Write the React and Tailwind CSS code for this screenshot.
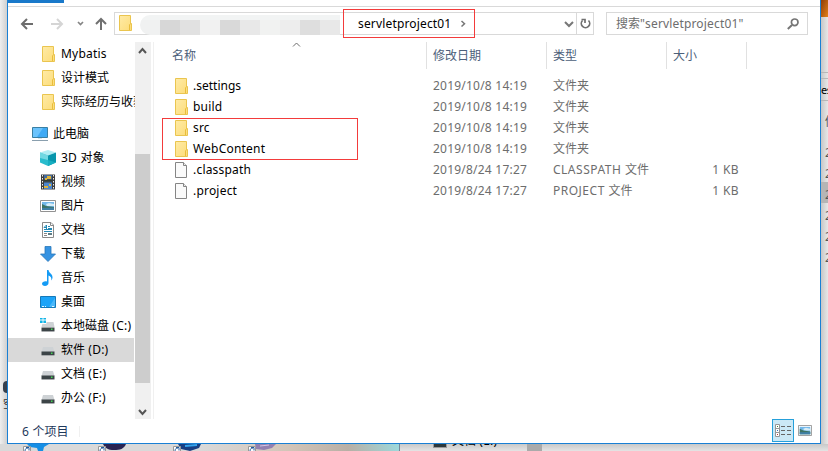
import React from 'react';

// Latin runs are set a little wider than the CJK runs beside them.
function T({ children, className = '', latin = 'tracking-[0.22px]' }) {
  return (
    <span className={`whitespace-pre ${className}`}>
      {children.split(/([\x20-\x7e]+)/).filter(Boolean).map((part, i) => (
        <span key={i} className={/^[\x20-\x7e]/.test(part) ? latin : ''}>{part}</span>
      ))}
    </span>
  );
}

const Folder = () => (
  <svg className="block h-4 w-[13px]" viewBox="0 0 13 16">
    <defs>
      <linearGradient id="fold" x2="1" y2="1"><stop stopColor="#ffeba6" /><stop offset="1" stopColor="#fcdc79" /></linearGradient>
    </defs>
    <path d="M.5.5h11v8h1v7H.5z" fill="url(#fold)" stroke="#eac54f" />
    <path d="M10.5 15V10l1-1.5" fill="none" stroke="#e9bd3b" />
  </svg>
);

const Doc = () => (
  <svg className="block h-4 w-[13px]" viewBox="0 0 13 16">
    <path d="M.5.5h8l3 3v12H.5z" fill="#fafafa" stroke="#858585" />
    <path d="M8.5.5v3h3" fill="#eee" stroke="#858585" />
  </svg>
);

const Drive = ({ system }) => (
  <svg className="block size-4" viewBox="0 0 16 16">
    {system && <path d="M0 0h2.6v2.6H0zM3.4 0H6v2.6H3.4zM0 3.4h2.6V6H0zM3.4 3.4H6V6H3.4z" fill="#12b4e6" transform="translate(0 -1)" />}
    <path d={system ? 'M6.5 4h7l1 5H1.500l.8-3h4z' : 'M3 5h10l1.500 5h-13z'} fill="#ced2d5" />
    <path d="M1.500 9.500h13V13h-13z" fill="#3c4447" />
    <path d="M1.500 13h13v1h-13z" fill="#a7aaac" />
    <path d="M11 10.500h1.500V12H11z" fill="#43d854" />
  </svg>
);

const Monitor = () => (
  <svg className="block size-4" viewBox="0 0 16 16">
    <path d="M.5 1.5h15v10H.5z" fill="#3faaf5" stroke="#397fa3" />
    <path d="M1 2h10L5 11H1z" fill="#6bc3fc" />
    <path d="M6 12h4v1H6z" fill="#d6e4ec" />
    <path d="M0 14.5h16" stroke="#8a9fae" />
  </svg>
);

const Cube = () => (
  <svg className="block size-4" viewBox="0 0 16 16">
    <path d="M8 0l8 2.5-8 3-8-3z" fill="#b0edf3" />
    <path d="M0 2.5l8 3V16l-8-3.5z" fill="#29bccd" />
    <path d="M16 2.5l-8 3V16l8-3.5z" fill="#0796ac" />
    <path d="M0 2.5l8 3V10L0 8z" fill="#70d8e2" />
    <path d="M8 10l8 2.5L8 16z" fill="#17afc1" />
  </svg>
);

const Film = () => (
  <svg className="block size-4" viewBox="0 0 16 16">
    <path d="M1 .5h14v15H1z" fill="#3d3d3d" />
    <path d="M4 1h8v6.5H4z" fill="#426b9f" />
    <path d="M4 8.5h8V15H4z" fill="#4c87cf" />
    <path d="M4 5.5h8v2H4z" fill="#323b30" />
    <path d="M7 2h4v3H7zM5 4h2v2H5zM9 10h2v2H9zM4 12h4v2H4z" fill="#dfb33b" />
    <path d="M2.5 1v14M13.5 1v14" stroke="#eee" strokeDasharray="1.5 1.5" />
  </svg>
);

const Picture = ({ className = 'h-[12px] w-4' }) => (
  <svg className={`block ${className}`} viewBox="0 0 16 12" preserveAspectRatio="none">
    <path d="M.5.5h15v11H.5z" fill="#fff" stroke="#929292" />
    <path d="M2 2h12v8H2z" fill="#73b8ea" />
    <path d="M6 4l3-1 5 1v2H7z" fill="#d7edf8" />
    <path d="M2 4l4 2 8 1v3H2z" fill="#3d7363" />
    <path d="M2 8l12-.5V10H2z" fill="#3f7fa5" />
  </svg>
);

const Document = () => (
  <svg className="block size-4" viewBox="0 0 16 16">
    <path d="M2.5.5H11L13.5 3v12.5h-11z" fill="#fff" stroke="#898989" />
    <path d="M10.5.5v3h3" fill="none" stroke="#898989" />
    <path d="M4 5.5h2M8 4.5h2M4 7.5h8M8 6.5h4M4 9.5h8" stroke="#2489b5" />
    <path d="M4 5.5L6.5 3v4" stroke="#2489b5" fill="none" />
    <path d="M4 11.5h3M4 13.5h3" stroke="#888" />
    <path d="M8 11h4v2H8z" fill="#5f7c84" />
  </svg>
);

const Download = () => (
  <svg className="block size-4" viewBox="0 0 16 16">
    <path d="M5 .5h6V8h4.5L8 15.5.5 8H5z" fill="#3693e2" stroke="#2877b9" strokeWidth=".8" />
  </svg>
);

const Music = () => (
  <svg className="block size-4" viewBox="0 0 16 16">
    <path d="M7 0h1.5c.4 3.2 4 3.8 4 7.2 0 1.3-.5 2.3-1.3 3.3.6-3-.6-4.2-2.7-5V13c0 1.6-1.5 3-3.5 3C3 16 2 15 2 13.8c0-1.8 2.5-3 5-2.3z" fill="#149bf5" />
  </svg>
);

const Desktop = () => (
  <svg className="block size-4" viewBox="0 0 16 16">
    <path d="M.5 2.5h15v11H.5z" fill="#1ca4f8" stroke="#1679b8" />
    <path d="M9 13l6-9v9z" fill="#49b8fb" />
    <path d="M2 12.5h2M5 12.5h1M12 12.5h2" stroke="#e2f6ff" />
  </svg>
);

const quick = ['Mybatis', '设计模式', '实际经历与收获'];
const places = [
  ['3D 对象', <Cube />], ['视频', <Film />], ['图片', <Picture />], ['文档', <Document />],
  ['下载', <Download />], ['音乐', <Music />], ['桌面', <Desktop />], ['本地磁盘 (C:)', <Drive system />],
  ['软件 (D:)', <Drive />], ['文档 (E:)', <Drive />], ['办公 (F:)', <Drive />],
];
const files = [
  ['.settings', '2019/10/8 14:19', '文件夹', ''],
  ['build', '2019/10/8 14:19', '文件夹', ''],
  ['src', '2019/10/8 14:19', '文件夹', ''],
  ['WebContent', '2019/10/8 14:19', '文件夹', ''],
  ['.classpath', '2019/8/24 17:27', 'CLASSPATH 文件', '1 KB'],
  ['.project', '2019/8/24 17:27', 'PROJECT 文件', '1 KB'],
];
const mosaic = ['bg-[#f0f1f1]', 'bg-[#d7d7d7]', 'bg-[#e1e1e1]', 'bg-[#f1f1f1]', 'bg-[#d9d9d9]', 'bg-[#e8e8e8]', 'bg-[#f1f2f1]', 'bg-[#ededed]', 'bg-[#dedede]', 'bg-[#e8e8e8]'];

function AddressBar() {
  return (
    <div className="flex h-[35px] shrink-0 items-start pt-[5px]">
      <svg className="h-[23px] w-[106px] shrink-0" viewBox="8 12 106 23" fill="none" strokeWidth="2">
        <path d="M33 24H22M27 19l-5 5 5 5" stroke="#6d6d6d" />
        <path d="M51 24h11M57 19l5 5-5 5" stroke="#d5d5d5" />
        <path d="M78 22l2.5 2.5L83 22" stroke="#858585" strokeWidth="1.7" />
        <path d="M101 30V19M96 24l5-5 5 5" stroke="#707070" />
      </svg>
      <div className="flex h-[23px] w-[480px] border border-[#d9d9d9]">
        <div className="w-[25px] pl-1 pt-[2px]"><Folder /></div>
        <div className="mt-[2px] flex h-5 w-[200px] overflow-hidden rounded-l-[10px]">
          {mosaic.map((c, i) => (
            <div key={i} className="flex w-5 flex-col">
              <div className="h-[5px] bg-[#f2f4f4]" />
              <div className={`flex-1 ${c}`} />
            </div>
          ))}
        </div>
        <T className="ml-[18px] leading-[21px] text-black" latin="tracking-[0.16px]">servletproject01</T>
        <svg className="ml-[9px] h-[21px] w-2" viewBox="0 0 8 21" fill="none"><path d="M1.5 8l3 2.7-3 2.8" stroke="#777" strokeWidth="1.5" /></svg>
        <svg className="ml-auto h-[21px] w-[16px]" viewBox="0 0 16 21" fill="none"><path d="M5 9l4 4 4-4" stroke="#777" strokeWidth="2" /></svg>
        <div className="w-[17px] border-l border-[#d9d9d9]">
          <svg className="h-[21px] w-4" viewBox="0 0 16 21" fill="none">
            <path d="M11.5 7.500a4.200 4.200 0 1 1-6 0M4.500 6.500h3.500V10" stroke="#707070" strokeWidth="1.7" />
          </svg>
        </div>
      </div>
      <div className="ml-3 flex h-[23px] w-[202px] border border-[#d9d9d9] pl-[9px] pr-2">
        <T className="leading-[21px] text-[#6d6d6d]" latin="tracking-[0.16px]">搜索"servletproject01"</T>
        <svg className="ml-auto mt-[5px] size-3" viewBox="0 0 12 12" fill="none" stroke="#757575">
          <circle cx="7.700" cy="4.300" r="3.300" strokeWidth="1.7" /><path d="M5 7L.8 11" strokeWidth="2" />
        </svg>
      </div>
    </div>
  );
}

function Sidebar() {
  return (
    <div className="flex w-[146px] shrink-0 border-r border-[#f0f0f0]">
      <div className="w-[127px] overflow-hidden text-black">
        {quick.map((q) => (
          <div key={q} className="flex h-6 items-center pl-[34px]">
            <div className="w-[19px] shrink-0"><Folder /></div>
            <div className="w-[74px] shrink-0 overflow-hidden leading-6"><T>{q}</T></div>
          </div>
        ))}
        <div className="mt-2 flex h-6 items-center gap-[5px] pl-6"><Monitor /><T>此电脑</T></div>
        {places.map(([name, icon]) => (
          <div key={name} className={`flex h-6 items-center gap-[5px] pl-8 ${name === '软件 (D:)' ? 'w-[126px] bg-[#d9d9d9]' : ''}`}>
            <div className="w-4 shrink-0">{icon}</div><T>{name}</T>
          </div>
        ))}
      </div>
      <div className="flex w-4 flex-col bg-[#f0f0f0]">
        <svg className="h-[112px] w-4" viewBox="0 0 16 112" fill="none"><path d="M4 11l3.5-4 3.5 4" stroke="#555" strokeWidth="2" /></svg>
        <div className="h-[229px] w-[15px] bg-[#cdcdcd]" />
        <svg className="h-9 w-4" viewBox="0 0 16 36" fill="none"><path d="M4 27l3.5 4 3.5-4" stroke="#555" strokeWidth="2" /></svg>
      </div>
    </div>
  );
}

function FileList() {
  return (
    <div className="relative flex-1">
      <svg className="absolute left-[138px] top-0 h-[6px] w-[10px]" viewBox="0 0 10 6" fill="none"><path d="M1 4.5L4.5 1 8 4.500" stroke="#6d6d6d" /></svg>
      <div className="flex h-[27px] leading-[27px] text-[#4c607a]">
        <div className="w-[273px] border-r border-[#e1e1e1] pl-[18px]">名称</div>
        <div className="w-[120px] border-r border-[#e1e1e1] pl-[6px]">修改日期</div>
        <div className="w-[120px] border-r border-[#e1e1e1] pl-[6px]">类型</div>
        <div className="w-[80px] border-r border-[#e1e1e1] pl-[6px]">大小</div>
      </div>
      <div className="pt-[6px] leading-[21px] text-[#6d6d6d]">
        {files.map(([name, date, type, size]) => (
          <div key={name} className="flex h-[21px] items-center pl-[21px]">
            <div className="w-[18px]">{size ? <Doc /> : <Folder />}</div>
            <T className="w-[240px] text-black" latin={name === '.settings' ? 'tracking-[0px]' : 'tracking-[0.2px]'}>{name}</T>
            <T className="w-[120px]">{date}</T>
            <T className="w-[120px]" latin="tracking-[0.5px]">{type}</T>
            <T className="w-[66px] text-right" latin="tracking-[0.4px]">{size}</T>
          </div>
        ))}
      </div>
      <div className="absolute left-[8px] top-[76px] h-[42px] w-[196px] border border-[#f33b3b]" />
    </div>
  );
}

function ExplorerWindow() {
  return (
    <div className="relative flex h-[444px] w-[814px] flex-col border border-t-0 border-[#1a80d4] bg-white">
      <div className="h-[7px] shrink-0 border-b border-[#d9d9d9]"><div className="h-[3px] w-14 bg-[#1979ca]" /></div>
      <AddressBar />
      <div className="flex h-[377px] shrink-0"><Sidebar /><FileList /></div>
      <div className="flex h-6 items-start pl-[14px] text-[#1e395b]">
        <T className="mt-[7px] h-[11px] w-[58px] border-r border-[#f0f0f0] leading-[12px]">6 个项目</T>
        <div className="ml-auto flex h-[23px] w-[22px] items-center justify-center border border-[#26a0da] bg-[#cbe8f6]">
          <svg className="h-[13px] w-4" viewBox="0 0 16 13" fill="none">
            <path d="M.5.5h4v12h-4zM.5 4.5h4M.5 8.5h4" fill="#fff" stroke="#969696" />
            <path d="M6 2.5h4M12 2.5h4M6 6.5h4M12 6.5h4M6 10.5h4M12 10.5h4" stroke="#666" />
            <path d="M2 2h1v1H2z" fill="#40863e" /><path d="M2 6h1v1H2z" fill="#3c70b4" /><path d="M2 10h1v1H2z" fill="#b43636" />
          </svg>
        </div>
        <div className="ml-1 mr-2 mt-[6px]"><Picture className="h-[11px] w-[14px]" /></div>
      </div>
      <div className="absolute left-[335px] top-[9px] h-[29px] w-[132px] border border-[#f33b3b]" />
    </div>
  );
}

const Shortcut = ({ x, children }) => (
  <g transform={`translate(${x} 0)`}>
    {children}
    <path d="M.5 2.5h7V8h-7z" fill="#fff" stroke="#999" />
    <path d="M2 7c0-2 1-3 3-3M3 3.5h3v3" fill="none" stroke="#245b9c" />
  </g>
);

export default function App() {
  return (
    <div className="flex h-[451px] w-[828px] flex-col overflow-hidden bg-[#e4e4e4] font-['Noto_Sans','Noto_Sans_CJK_SC',sans-serif] text-[12px]">
      <div className="flex h-[444px]">
        <div className="flex w-[7px] shrink-0 flex-col bg-gradient-to-r from-[#efefef] to-[#d0d0d0] pt-[381px]">
          <div className="ml-[3px] h-3 w-1 rounded-l bg-[#36404d]" />
          <div className="ml-[3px] mt-[5px] h-[11px] overflow-hidden text-[11px] leading-[11px] text-[#333]">空</div>
        </div>
        <ExplorerWindow />
        <div className="flex w-[7px] shrink-0 flex-col overflow-hidden bg-gradient-to-r from-[#c7c7c7] to-[#e8e8e8] text-[#555]">
          <div className="h-[17px] shrink-0 bg-gradient-to-br from-[#8e3d08] to-[#e48119]" />
          <div className="h-14 shrink-0 border-b border-[#b7b7b7]" />
          <div className="mt-[5px] h-[23px] shrink-0 border-y border-[#b7b7b7] text-[11px] leading-[21px] tracking-[-0.5px] text-black">es</div>
          <div className="h-[39px] shrink-0 pl-1 leading-[42px]">修</div>
          {['a', 'b', 'c', 'd', 'e', 'f'].map((row) => (
            <div key={row} className={`h-[21px] shrink-0 pl-1 leading-[25px] ${row === 'c' ? 'bg-[#b5b5b5]' : ''}`}>2</div>
          ))}
        </div>
      </div>
      <div className="flex h-[7px] overflow-hidden">
        <svg className="h-[7px] w-[400px] shrink-0" viewBox="0 0 400 7">
          <defs><linearGradient id="desk"><stop offset=".5" stopColor="#d9d9d9" /><stop offset=".72" stopColor="#d3c5b8" /><stop offset=".87" stopColor="#b8afa5" /><stop offset="1" stopColor="#9cd9dc" /></linearGradient></defs>
          <path d="M0 0h400v7H0z" fill="url(#desk)" />
          <Shortcut x="23"><path d="M4 0h22l-5 3-1 4h-5l-1-3-7-1z" fill="#168fe5" /></Shortcut>
          <Shortcut x="98"><path d="M5 0h23c-2 5-6 6-12 6S7 4 5 0z" fill="#292453" /></Shortcut>
          <Shortcut x="173"><path d="M5 0h23l-2 4-9 3-9-2z" fill="#193f83" /><path d="M12 2l12-1" stroke="#35a5ed" strokeWidth="2" /></Shortcut>
          <Shortcut x="248"><path d="M7 0h21l-4 4-8 2-8-1z" fill="#9380b1" /><path d="M12 2l9-1" stroke="#d3c6e3" /></Shortcut>
          <path d="M399.5 0v7" stroke="#789" />
        </svg>
        <div className="flex h-[7px] w-[428px] overflow-hidden bg-gradient-to-b from-[#c9c9c9] to-[#e4e4e4]">
          <div className="ml-[33px] h-1 w-[14px] border border-t-0 border-[#999] bg-[#2d383c]" />
          <T className="-mt-[12px] ml-[5px] leading-[18px] text-black">文档 (E:)</T>
          <div className="ml-auto mr-[286px] h-[7px] w-[15px] bg-[#aaa]" />
        </div>
      </div>
    </div>
  );
}
